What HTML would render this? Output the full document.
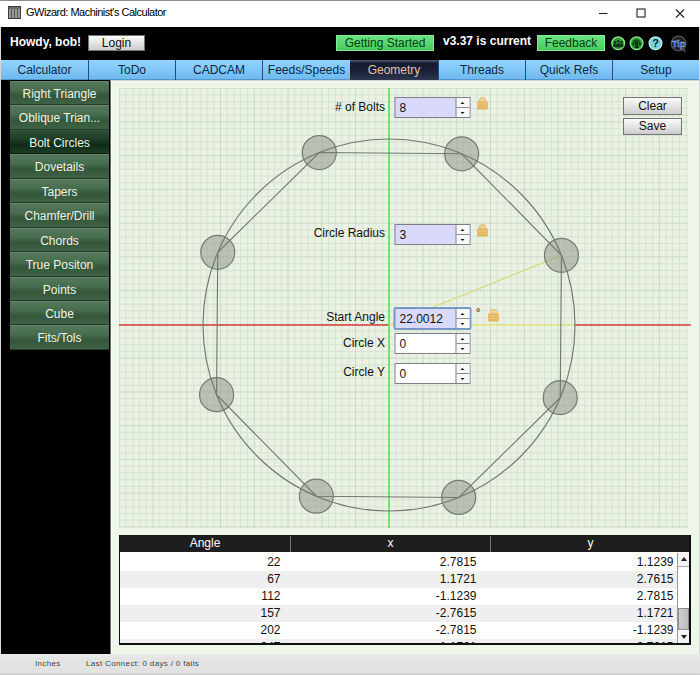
<!DOCTYPE html>
<html><head><meta charset="utf-8"><title>GWizard: Machinist's Calculator</title>
<style>
*{box-sizing:border-box;margin:0;padding:0}
html,body{width:700px;height:675px;overflow:hidden;background:#000;font-family:"Liberation Sans",Arial,sans-serif;font-size:12px;color:#111}
#win{position:absolute;left:0;top:0;width:700px;height:675px;background:#000;overflow:hidden}
#title{position:absolute;left:0;top:0;width:700px;height:27px;background:#fff;border-top:1px solid #8a8a8a}
#title .ico{position:absolute;left:8px;top:5px;width:13px;height:13px;background:#555;border:1px solid #3c3c3c;background-image:repeating-linear-gradient(90deg,#9a9a9a 0 2px,#555 2px 3px)}
#title .ico:before{content:"";position:absolute;left:0;top:0;right:0;height:2px;background:#6a6a6a}
#title .t{position:absolute;left:26px;top:5px;font-size:11px;color:#000;white-space:nowrap;letter-spacing:-0.5px}
#title svg{position:absolute;top:0}
#hdr{position:absolute;left:1px;top:27px;width:698px;height:34px;background:#000}
.howdy{position:absolute;left:9px;top:8px;color:#fff;font-weight:bold;font-size:12px;white-space:nowrap}
.btn{position:absolute;border:1px solid #747474;background:linear-gradient(#fbfbfb,#cdcdcd);color:#111;text-align:center;font-size:12px;white-space:nowrap}
.gbtn{position:absolute;border:1px solid #84ec94;background:linear-gradient(#6ce384,#48ca5e);color:#07400f;text-align:center;font-size:12px;white-space:nowrap}
.ver{position:absolute;color:#fff;font-weight:bold;font-size:12px;white-space:nowrap}
#tabs{position:absolute;left:0;top:60px;width:700px;height:20px;background:#1d4f85}
#tabs div{position:absolute;top:0;height:20px;line-height:21px;text-align:center;font-size:12px;color:#0b2748;background:linear-gradient(#93d3fc 0%,#80c7f7 50%,#6fb9f0 94%,#3f7fb8 100%);white-space:nowrap;overflow:hidden}
#tabs div.sel{background:linear-gradient(#4a5670 0%,#3a4660 8%,#161c30 14%,#1a2136 55%,#2c3650 100%);color:#e4c3a2}
#side{position:absolute;left:10px;top:81px;width:99px}
#side div{position:absolute;left:0;width:99px;height:24px;line-height:24px;text-align:center;color:#eef3e6;font-size:12px;background:linear-gradient(#54785a 0%,#486c4e 38%,#345639 62%,#3f6245 100%);border-top:1px solid #668868;border-bottom:1px solid #243a2a;white-space:nowrap}
#side div.sel{background:linear-gradient(#2e4e34 0%,#1e3c26 38%,#0e2c16 62%,#1c3c24 100%);border-top:1px solid #36563c;border-bottom:1px solid #0a1a0e}
#panel{position:absolute;left:110px;top:80px;width:589px;height:574px;background:#eff6ea;border-left:1px solid #6c6e6a;border-top:1px solid #c9d6da;box-shadow:inset 1px 0 #fcfefa}
.draw{position:absolute;left:119px;top:88px}
.lbl{position:absolute;font-size:12px;color:#111;text-align:right;white-space:nowrap;width:120px}
.num{position:absolute;transform:translateX(0.5px);width:76px;height:21px;border:1px solid #7e7e88;background:#fff}
.num.lav{background:#d9d9fb}
.num.focus{border:1px solid #7596c4;box-shadow:0 0 0 1px #7b9ccb;border-radius:1px}
.num .v{position:absolute;left:4px;top:3px;font-size:12px;color:#111}
.num .sp{position:absolute;right:0;top:0;width:14px;height:19px;background:#f8f8f8;border-left:1px solid #7e7e86}
.num .sp:before{content:"";position:absolute;left:0;right:0;top:9px;height:1px;background:#8a8a90}
.num .sp i{position:absolute;left:4px;width:0;height:0;border-left:2.75px solid transparent;border-right:2.75px solid transparent}
.num .sp i.up{top:4px;border-bottom:2.5px solid #111}
.num .sp i.dn{top:13.5px;border-top:2.5px solid #111}
.lock{position:absolute}
.deg{position:absolute;font-size:11px;color:#222}
#tbl{position:absolute;left:119px;top:535px;width:572px;height:110px;border:1px solid #111;border-width:0 2px 2px 1px;background:#fff;overflow:hidden}
#tbl .h{position:absolute;left:-1px;top:0;width:572px;height:17px;background:#1e1e1e;color:#fff;font-size:12px}
#tbl .h span{position:absolute;top:0;height:17px;line-height:17px;text-align:center}
#tbl .h b{position:absolute;top:1px;width:1px;height:16px;background:#777}
#tbl .r{position:absolute;left:0;width:557px;height:17px;font-size:12px;line-height:17px}
#tbl .r.alt{background:#efefef}
#tbl .r span{position:absolute;top:0;text-align:right;white-space:nowrap}
#sb{position:absolute;right:0;top:18px;width:12px;height:90px;background:#fff;border-left:1px solid #999}
#sb .a{position:absolute;left:0;width:11px;height:14px;background:#f4f4f4;border:1px solid #aaa;border-width:0 0 1px 0}
#sb .a i{position:absolute;left:2.5px;top:4px;border-left:3px solid transparent;border-right:3px solid transparent}
#sb .th{position:absolute;left:0;top:55px;width:11px;height:22px;background:linear-gradient(90deg,#d0d0d0,#bcbcbc);border:1px solid #8c8c8c}
#status{position:absolute;left:0;top:654px;width:700px;height:21px;background:linear-gradient(#ececec,#e4e4e4 20%,#e2e2e2 90%,#c6c6c6 100%);font-size:8px;color:#333}
.edge{position:absolute;top:27px;width:1px;height:648px;background:#d8d8d8}
#status span{position:absolute;top:5px;white-space:nowrap;letter-spacing:0.35px;color:#444}
</style></head><body><div id="win">
<div id="title"><div class="ico"></div><div class="t">GWizard: Machinist's Calculator</div>
<svg style="left:590px" width="110" height="27" viewBox="0 0 110 27"><path d="M9 12.500H17.500" stroke="#222" stroke-width="1.100" fill="none"/><rect x="47" y="8" width="8" height="8" fill="none" stroke="#222" stroke-width="1.100"/><path d="M86 8.500L94 16.500M94 8.500L86 16.500" stroke="#222" stroke-width="1.100" fill="none"/></svg>
</div>
<div id="hdr">
<div class="howdy">Howdy, bob!</div>
<div class="btn" style="left:87px;top:8px;width:57px;height:16px;line-height:14px">Login</div>
<div class="gbtn" style="left:335px;top:8px;width:98px;height:16px;line-height:14px">Getting Started</div>
<div class="ver" style="left:442px;top:7px">v3.37 is current</div>
<div class="gbtn" style="left:536px;top:8px;width:68px;height:16px;line-height:14px">Feedback</div>
<svg style="position:absolute;left:607px;top:6px" width="84" height="22" viewBox="608 33 84 22">
<g transform="translate(618.2 43.3)"><circle r="6.400" fill="#2f9a36" stroke="#8fe68f" stroke-width="1.200"/>
<g fill="#0b2e0d"><circle cx="-3.100" cy="-1" r="1.250"/><circle cx="3.100" cy="-1" r="1.250"/><path d="M-5.200 3.600q0-3.300 2.100-3.300t2.100 3.300zM1 3.600q0-3.300 2.100-3.300t2.100 3.300z"/><circle cx="0" cy="-2" r="1.550" stroke="#2f9a36" stroke-width="0.400"/><path d="M-2.600 4.200q0-4.300 2.600-4.300t2.600 4.300z" stroke="#2f9a36" stroke-width="0.400"/></g></g>
<g transform="translate(636.6 43.3)"><circle r="6.400" fill="#2f9a36" stroke="#8fe68f" stroke-width="1.200"/>
<g fill="#0b2e0d"><path d="M-3.300 0.300a3.300 3.600 0 0 1 6.600 0" fill="none" stroke="#0b2e0d" stroke-width="1.100"/><rect x="-4.100" y="-0.600" width="1.700" height="3" rx="0.600"/><rect x="2.400" y="-0.600" width="1.700" height="3" rx="0.600"/><circle cx="0" cy="-0.300" r="1.900"/><path d="M-1.300 1.200h2.600l0.900 3.400h-4.400z"/></g></g>
<g transform="translate(655.5 43.3)"><circle r="6.400" fill="#7fd2da" stroke="#b6f1f3" stroke-width="1.200"/>
<text x="0" y="4" font-size="11" font-weight="bold" text-anchor="middle" fill="#06222a" font-family="Liberation Sans, sans-serif">?</text></g>
<g transform="translate(678.6 43.5)"><path d="M3 6l4.500 3.500l-1.500-5z" fill="#4a4a50"/><circle r="7.300" fill="#1f2026" stroke="#56565c" stroke-width="1.300"/>
<text x="0" y="3.200" font-size="9" font-weight="bold" text-anchor="middle" fill="#2e5fd6" stroke="#a9bdf0" stroke-width="0.350" font-family="Liberation Sans, sans-serif">Tip</text></g>
</svg>
</div>
<div id="tabs"><div style="left:1px;width:87px">Calculator</div><div style="left:89px;width:86px">ToDo</div><div style="left:176px;width:86px">CADCAM</div><div style="left:263px;width:87px">Feeds/Speeds</div><div style="left:350px;width:88px" class=sel>Geometry</div><div style="left:439px;width:86px">Threads</div><div style="left:526px;width:86px">Quick Refs</div><div style="left:613px;width:86px">Setup</div></div>
<div id="panel"></div>
<div id="side"><div style="top:0px;height:24px">Right Triangle</div><div style="top:24px;height:25px">Oblique Trian...</div><div style="top:49px;height:24px" class=sel>Bolt Circles</div><div style="top:73px;height:25px">Dovetails</div><div style="top:98px;height:24px">Tapers</div><div style="top:122px;height:25px">Chamfer/Drill</div><div style="top:147px;height:24px">Chords</div><div style="top:171px;height:25px">True Positon</div><div style="top:196px;height:24px">Points</div><div style="top:220px;height:24px">Cube</div><div style="top:244px;height:25px">Fits/Tols</div></div>
<svg class="draw" width="572" height="440" viewBox="119 88 572 440">
<rect x="119" y="88" width="569.0" height="440" fill="#e9f2e3"/>
<path d="M126.05 88V528M132.80 88V528M139.55 88V528M146.30 88V528M159.80 88V528M166.55 88V528M173.30 88V528M180.05 88V528M193.55 88V528M200.30 88V528M207.05 88V528M213.80 88V528M227.30 88V528M234.05 88V528M240.80 88V528M247.55 88V528M261.05 88V528M267.80 88V528M274.55 88V528M281.30 88V528M294.80 88V528M301.55 88V528M308.30 88V528M315.05 88V528M328.55 88V528M335.30 88V528M342.05 88V528M348.80 88V528M362.30 88V528M369.05 88V528M375.80 88V528M382.55 88V528M396.05 88V528M402.80 88V528M409.55 88V528M416.30 88V528M429.80 88V528M436.55 88V528M443.30 88V528M450.05 88V528M463.55 88V528M470.30 88V528M477.05 88V528M483.80 88V528M497.30 88V528M504.05 88V528M510.80 88V528M517.55 88V528M531.05 88V528M537.80 88V528M544.55 88V528M551.30 88V528M564.80 88V528M571.55 88V528M578.30 88V528M585.05 88V528M598.55 88V528M605.30 88V528M612.05 88V528M618.80 88V528M632.30 88V528M639.05 88V528M645.80 88V528M652.55 88V528M666.05 88V528M672.80 88V528M679.55 88V528M686.30 88V528M119 94.95H688.0M119 101.70H688.0M119 108.45H688.0M119 115.20H688.0M119 128.70H688.0M119 135.45H688.0M119 142.20H688.0M119 148.95H688.0M119 162.45H688.0M119 169.20H688.0M119 175.95H688.0M119 182.70H688.0M119 196.20H688.0M119 202.95H688.0M119 209.70H688.0M119 216.45H688.0M119 229.95H688.0M119 236.70H688.0M119 243.45H688.0M119 250.20H688.0M119 263.70H688.0M119 270.45H688.0M119 277.20H688.0M119 283.95H688.0M119 297.45H688.0M119 304.20H688.0M119 310.95H688.0M119 317.70H688.0M119 331.20H688.0M119 337.95H688.0M119 344.70H688.0M119 351.45H688.0M119 364.95H688.0M119 371.70H688.0M119 378.45H688.0M119 385.20H688.0M119 398.70H688.0M119 405.45H688.0M119 412.20H688.0M119 418.95H688.0M119 432.45H688.0M119 439.20H688.0M119 445.95H688.0M119 452.70H688.0M119 466.20H688.0M119 472.95H688.0M119 479.70H688.0M119 486.45H688.0M119 499.95H688.0M119 506.70H688.0M119 513.45H688.0M119 520.20H688.0" stroke="#d7e3d3" stroke-width="1" fill="none"/>
<path d="M119.30 88V528M153.05 88V528M186.80 88V528M220.55 88V528M254.30 88V528M288.05 88V528M321.80 88V528M355.55 88V528M389.30 88V528M423.05 88V528M456.80 88V528M490.55 88V528M524.30 88V528M558.05 88V528M591.80 88V528M625.55 88V528M659.30 88V528M119 88.20H688.0M119 121.95H688.0M119 155.70H688.0M119 189.45H688.0M119 223.20H688.0M119 256.95H688.0M119 290.70H688.0M119 324.45H688.0M119 358.20H688.0M119 391.95H688.0M119 425.70H688.0M119 459.45H688.0M119 493.20H688.0M119 526.95H688.0" stroke="#cbd9c7" stroke-width="1" fill="none"/>
<path d="M119 325.0H389.0M575.0 325.0H691" stroke="#dc3a3a" stroke-width="1.4" fill="none"/>
<line x1="389.0" y1="88" x2="389.0" y2="528" stroke="#3fe63f" stroke-width="1.35"/>
<line x1="389.0" y1="325.0" x2="575.0" y2="325.0" stroke="#e4e47c" stroke-width="1.4"/>
<line x1="389.0" y1="325.0" x2="561.45" y2="255.32" stroke="#d8d870" stroke-width="1.2"/>
<circle cx="561.45" cy="255.32" r="17.0" fill="#8e958a" fill-opacity="0.52" stroke="#747c74" stroke-width="1.2"/>
<circle cx="461.67" cy="153.78" r="17.0" fill="#8e958a" fill-opacity="0.52" stroke="#747c74" stroke-width="1.2"/>
<circle cx="319.32" cy="152.55" r="17.0" fill="#8e958a" fill-opacity="0.52" stroke="#747c74" stroke-width="1.2"/>
<circle cx="217.78" cy="252.33" r="17.0" fill="#8e958a" fill-opacity="0.52" stroke="#747c74" stroke-width="1.2"/>
<circle cx="216.55" cy="394.68" r="17.0" fill="#8e958a" fill-opacity="0.52" stroke="#747c74" stroke-width="1.2"/>
<circle cx="316.33" cy="496.22" r="17.0" fill="#8e958a" fill-opacity="0.52" stroke="#747c74" stroke-width="1.2"/>
<circle cx="458.68" cy="497.45" r="17.0" fill="#8e958a" fill-opacity="0.52" stroke="#747c74" stroke-width="1.2"/>
<circle cx="560.22" cy="397.67" r="17.0" fill="#8e958a" fill-opacity="0.52" stroke="#747c74" stroke-width="1.2"/>
<circle cx="389.0" cy="325.0" r="186.0" fill="none" stroke="#707870" stroke-width="1.15"/>
<polygon points="561.45,255.32 461.67,153.78 319.32,152.55 217.78,252.33 216.55,394.68 316.33,496.22 458.68,497.45 560.22,397.67" fill="none" stroke="#707870" stroke-width="1.15"/>
</svg>
<div class="lbl" style="left:265px;top:100px"># of Bolts</div>
<div class="num lav" style="left:394px;top:97px"><span class="v">8</span><span class="sp"><i class="up"></i><i class="dn"></i></span></div><svg class="lock" style="left:477px;top:97px" width="12" height="13" viewBox="0 0 12 13"><path d="M2.200 6V3.600a3.300 3.300 0 0 1 6.600 0V6z" fill="#ecd29c" stroke="#e2b96e" stroke-width="0.8"/><rect x="0.2" y="4.600" width="10.600" height="7.900" rx="0.8" fill="#e3b35e"/><rect x="1" y="6.300" width="9" height="1.300" fill="#efcb86"/><rect x="1" y="9" width="9" height="1.200" fill="#ebc176"/></svg>
<div class="lbl" style="left:265px;top:226px">Circle Radius</div>
<div class="num lav" style="left:394px;top:224px"><span class="v">3</span><span class="sp"><i class="up"></i><i class="dn"></i></span></div><svg class="lock" style="left:477px;top:224px" width="12" height="13" viewBox="0 0 12 13"><path d="M2.200 6V3.600a3.300 3.300 0 0 1 6.600 0V6z" fill="#ecd29c" stroke="#e2b96e" stroke-width="0.8"/><rect x="0.2" y="4.600" width="10.600" height="7.900" rx="0.8" fill="#e3b35e"/><rect x="1" y="6.300" width="9" height="1.300" fill="#efcb86"/><rect x="1" y="9" width="9" height="1.200" fill="#ebc176"/></svg>
<div class="lbl" style="left:265px;top:310px">Start Angle</div>
<div class="num lav focus" style="left:394px;top:308px"><span class="v">22.0012</span><span class="sp"><i class="up"></i><i class="dn"></i></span></div><div class="deg" style="left:476px;top:306px">°</div><svg class="lock" style="left:488px;top:309px" width="12" height="13" viewBox="0 0 12 13"><path d="M2.200 6V3.600a3.300 3.300 0 0 1 6.600 0V6z" fill="#ecd29c" stroke="#e2b96e" stroke-width="0.8"/><rect x="0.2" y="4.600" width="10.600" height="7.900" rx="0.8" fill="#e3b35e"/><rect x="1" y="6.300" width="9" height="1.300" fill="#efcb86"/><rect x="1" y="9" width="9" height="1.200" fill="#ebc176"/></svg>
<div class="lbl" style="left:265px;top:336px">Circle X</div>
<div class="num" style="left:394px;top:333px"><span class="v">0</span><span class="sp"><i class="up"></i><i class="dn"></i></span></div>
<div class="lbl" style="left:265px;top:365px">Circle Y</div>
<div class="num" style="left:394px;top:363px"><span class="v">0</span><span class="sp"><i class="up"></i><i class="dn"></i></span></div>
<div class="btn" style="left:623px;top:97px;width:59px;height:18px;line-height:16px">Clear</div>
<div class="btn" style="left:623px;top:118px;width:59px;height:17px;line-height:15px">Save</div>
<div id="tbl"><div class="h"><span style="left:0;width:172px">Angle</span><b style="left:171px"></b><span style="left:172px;width:199px">x</span><b style="left:371px"></b><span style="left:372px;width:199px">y</span></div>
<div class="r" style="top:19px"><span style="right:396.5px">22</span><span style="right:200.5px">2.7815</span><span style="right:3.5px">1.1239</span></div><div class="r alt" style="top:36px"><span style="right:396.5px">67</span><span style="right:200.5px">1.1721</span><span style="right:3.5px">2.7615</span></div><div class="r" style="top:53px"><span style="right:396.5px">112</span><span style="right:200.5px">-1.1239</span><span style="right:3.5px">2.7815</span></div><div class="r alt" style="top:70px"><span style="right:396.5px">157</span><span style="right:200.5px">-2.7615</span><span style="right:3.5px">1.1721</span></div><div class="r" style="top:87px"><span style="right:396.5px">202</span><span style="right:200.5px">-2.7815</span><span style="right:3.5px">-1.1239</span></div><div class="r alt" style="top:104px"><span style="right:396.5px">247</span><span style="right:200.5px">-1.1721</span><span style="right:3.5px">-2.7615</span></div>
<div id="sb"><div class="a" style="top:0"><i style="border-bottom:4px solid #222"></i></div><div class="th"></div><div class="a" style="top:78px;height:12px;border-width:0"><i style="border-top:4px solid #222"></i></div></div>
</div>
<div class="edge" style="left:0"></div><div class="edge" style="left:699px"></div><div id="status"><span style="left:35px">Inches</span><span style="left:86px">Last Connect: 0 days / 0 fails</span></div>
</div></body></html>
